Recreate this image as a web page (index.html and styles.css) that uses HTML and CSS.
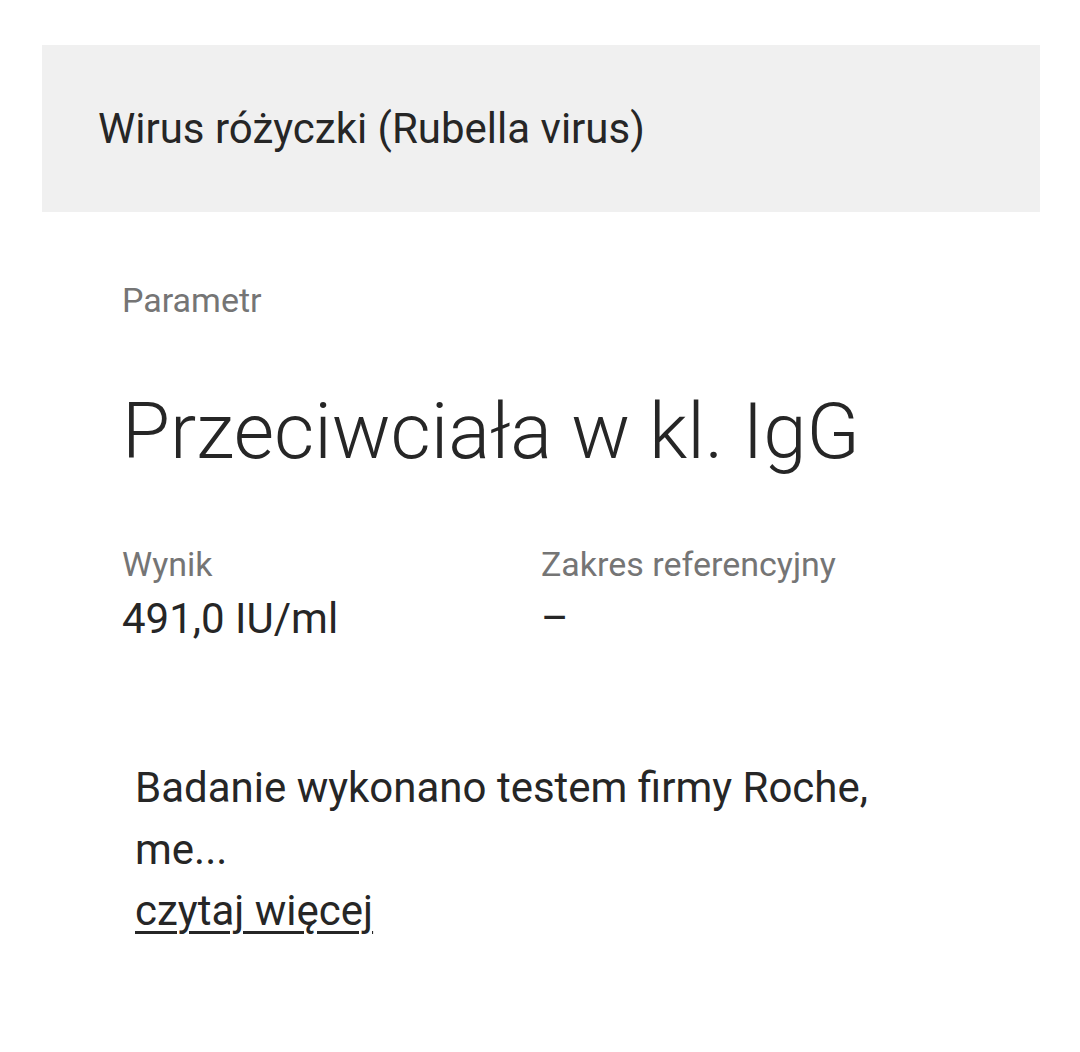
FILE: index.html
```html
<!DOCTYPE html>
<html lang="pl">
<head>
<meta charset="utf-8">
<link rel="stylesheet" href="styles.css">
</head>
<body>
<div class="page">
  <div class="header">
    <h1 class="header-title">Wirus różyczki (Rubella virus)</h1>
  </div>
  <div class="content">
    <div class="label">Parametr</div>
    <div class="param-name">Przeciwciała w kl. IgG</div>
    <div class="values">
      <div class="col">
        <div class="label">Wynik</div>
        <div class="value">491,0 IU/ml</div>
      </div>
      <div class="col">
        <div class="label">Zakres referencyjny</div>
        <div class="value">–</div>
      </div>
    </div>
    <div class="note">
      <p class="note-text">Badanie wykonano testem firmy Roche,<br>me...</p>
      <a class="more" href="#">czytaj więcej</a>
    </div>
  </div>
</div>
</body>
</html>
```

FILE: styles.css
```css
html, body {
  margin: 0;
  padding: 0;
  background: #ffffff;
}
body {
  font-family: Roboto, "Noto Sans", sans-serif;
  color: #262626;
}
.page {
  padding: 45px 40px 0 42px;
}
.header {
  background: #f0f0f0;
  height: 167px;
  display: flex;
  align-items: center;
  padding-left: 56px;
}
.header-title {
  margin: 0;
  font-size: 42px;
  font-weight: 400;
  line-height: 1;
  color: #262626;
}
.content {
  padding-left: 80px;
  padding-top: 68px;
}
.label {
  font-size: 34px;
  color: #757575;
  line-height: 40px;
}
.param-name {
  font-size: 78px;
  font-weight: 300;
  line-height: 78px;
  margin-top: 73px;
  color: #262626;
}
.values {
  display: flex;
  margin-top: 73px;
}
.col {
  width: 419px;
}
.value {
  font-size: 42px;
  line-height: 48px;
  margin-top: 11px;
  color: #262626;
}
.note {
  padding-left: 13px;
  margin-top: 114px;
  font-size: 42px;
  line-height: 61.7px;
}
.note-text {
  margin: 0;
}
.more {
  color: #262626;
  text-decoration: underline;
  text-decoration-thickness: 3px;
  text-underline-offset: 6px;
}
```
